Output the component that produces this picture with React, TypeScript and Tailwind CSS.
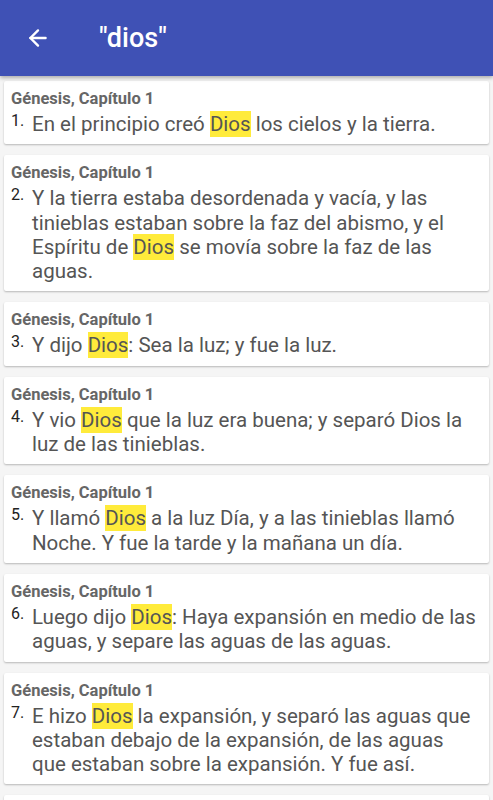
import { ArrowLeft } from 'lucide-react';

const VERSES = [
  { n: 1, before: 'En el principio creó ', after: ' los cielos y la tierra.' },
  {
    n: 2,
    before: 'Y la tierra estaba desordenada y vacía, y las tinieblas estaban sobre la faz del abismo, y el Espíritu de ',
    after: ' se movía sobre la faz de las aguas.',
  },
  { n: 3, before: 'Y dijo ', after: ': Sea la luz; y fue la luz.' },
  { n: 4, before: 'Y vio ', after: ' que la luz era buena; y separó Dios la luz de las tinieblas.' },
  { n: 5, before: 'Y llamó ', after: ' a la luz Día, y a las tinieblas llamó Noche. Y fue la tarde y la mañana un día.' },
  { n: 6, before: 'Luego dijo ', after: ': Haya expansión en medio de las aguas, y separe las aguas de las aguas.' },
  {
    n: 7,
    before: 'E hizo ',
    after: ' la expansión, y separó las aguas que estaban debajo de la expansión, de las aguas que estaban sobre la expansión. Y fue así.',
  },
  { n: 8, before: 'Y llamó ', after: ' a la expansión Cielos. Y fue la tarde y la mañana el día segundo.' },
];

export default function App() {
  return (
    <div
      className="flex flex-col w-[493px] h-[800px] overflow-hidden bg-[#f5f5f5]"
      style={{ fontFamily: 'Roboto, "Liberation Sans", sans-serif' }}
    >
      {/* Toolbar */}
      <header className="relative z-10 flex items-center h-[76px] shrink-0 bg-[#3f51b5] shadow-[0_2px_4px_rgba(0,0,0,0.3)]">
        <div className="w-[99px] pl-[25px] flex items-center">
          <ArrowLeft size={26} color="#ffffff" strokeWidth={2.2} />
        </div>
        <h1 className="text-white text-[27px] font-medium leading-none">"dios"</h1>
      </header>

      {/* Results */}
      <main className="flex flex-col gap-[11px] px-[4px] pt-[5px]">
        {VERSES.map((v) => (
          <div
            key={v.n}
            className="bg-white rounded-[2px] shadow-[0_1px_2px_rgba(0,0,0,0.25)] px-[7px] pt-[8px] pb-[8px]"
          >
            <div className="text-[16.5px] leading-[20px] font-bold text-[#666666] mb-[3px]">Génesis, Capítulo 1</div>
            <div className="flex">
              <span className="w-[21px] shrink-0 text-[16px] leading-[18px] text-[#222222]">{v.n}.</span>
              <p className="text-[20.5px] leading-[24.3px] text-[#555555]">
                {v.before}
                <span className="bg-[#ffeb3b] py-[1px]">Dios</span>
                {v.after}
              </p>
            </div>
          </div>
        ))}
      </main>
    </div>
  );
}
